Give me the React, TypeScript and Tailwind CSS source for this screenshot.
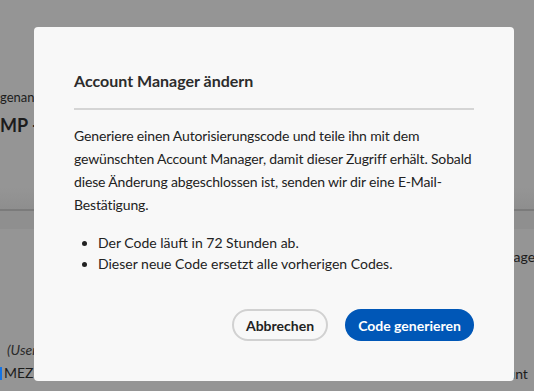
export default function App() {
  return (
    <div
      className="relative w-[534px] h-[391px] overflow-hidden bg-[#959595] text-[#1c1c1c]"
      style={{ fontFamily: "Lato, 'Noto Sans', sans-serif" }}
    >
      {/* page behind the overlay */}
      <div className="pt-[88px]">
        <div className="w-[34px] overflow-hidden text-[13px] leading-[18px] whitespace-nowrap">genannt</div>
        <div className="mt-[6px] w-[34px] overflow-hidden text-[18px] leading-[26px] font-bold whitespace-nowrap">MP - Übersicht</div>
        <div className="h-[71px] bg-gradient-to-b from-[#959595] from-70% to-[#8e8e8e]" />
        <div className="h-[2px] bg-[#7b7b7b]" />
        <div className="h-[18px] bg-[#8f8f8f]" />
        <div className="flex">
          <div className="w-[484px] shrink-0 pt-[111px] pl-[7px]">
            <div className="w-[27px] overflow-hidden text-[14px] leading-[20px] italic text-[#2a2a2a] whitespace-nowrap">(User ID)</div>
            <div className="mt-[3px] w-[34px] text-[14px] leading-[20px] whitespace-nowrap -ml-[7px] flex items-center">
              <span className="inline-block w-[2px] h-[13px] bg-[#1473e6] mr-[2px]" />
              MEZ
            </div>
          </div>
          <div className="pt-[18px] text-[14px] leading-[20px] whitespace-nowrap">
            <div className="pl-[2px]">Manager</div>
            <div className="mt-[7px] pl-[23px] h-[2px] flex">
              <span className="w-[2px] h-[1px] bg-[#1473e6]" />
            </div>
            <div className="mt-[88px] -ml-[7px]">Account</div>
          </div>
        </div>
      </div>

      {/* dialog */}
      <div className="absolute left-[34px] top-[27px] w-[480px] rounded-[4px] bg-[#f8f8f8] px-[40px] pt-[40px] pb-[40px] text-[#222]">
        <h2 className="text-[16px] leading-[28px] font-bold text-[#2c2c2c]">Account Manager ändern</h2>
        <div className="mt-[13px] h-[2px] bg-[#d5d5d5]" />
        <p className="mt-[14px] -mr-[14px] text-[14px] leading-[23px] tracking-[-0.15px]">
          Generiere einen Autorisierungscode und teile ihn mit dem
          <br />
          gewünschten Account Manager, damit dieser Zugriff erhält. Sobald
          <br />
          diese Änderung abgeschlossen ist, senden wir dir eine E-Mail-
          <br />
          Bestätigung.
        </p>
        <ul className="mt-[16px] list-disc pl-[24px] text-[14px] leading-[21px]">
          <li>Der Code läuft in 72 Stunden ab.</li>
          <li>Dieser neue Code ersetzt alle vorherigen Codes.</li>
        </ul>
        <div className="mt-[35px] flex justify-end gap-[17px]">
          <button className="w-[96px] h-[32px] rounded-full border-2 border-[#d1d1d1] text-[14px] font-bold text-[#222]">
            Abbrechen
          </button>
          <button className="w-[129px] h-[32px] rounded-full bg-[#0057b7] text-[14px] font-bold text-white">
            Code generieren
          </button>
        </div>
      </div>
    </div>
  );
}
